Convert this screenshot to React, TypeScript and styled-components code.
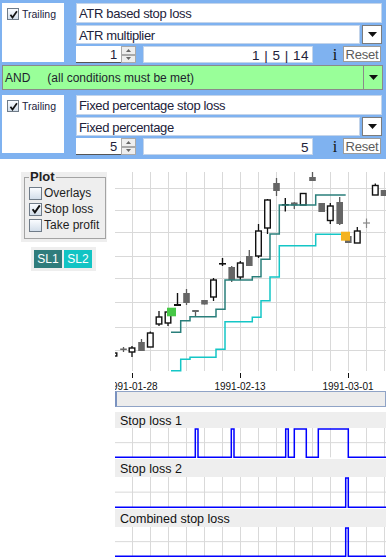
import React from 'react'
import styled, { createGlobalStyle, css } from 'styled-components'

const GlobalStyle = createGlobalStyle`
  html, body {
    margin: 0;
    padding: 0;
    background: #fff;
  }
  body {
    font-family: "Liberation Sans", Arial, sans-serif;
  }
  #root {
    width: 386px;
    height: 560px;
    overflow: hidden;
  }
`

const Page = styled.div`
  width: 386px;
  height: 560px;
  overflow: hidden;
  background: #fff;
`

// ---- condition editor (blue panel) ----

const ConfigPanel = styled.div`
  background: #7fb2f0;
  padding: 3px 0 4px;
`

const ConditionBlock = styled.div<{ $top?: number }>`
  display: flex;
  gap: 12px;
  padding: 0 4px 0 2px;
  margin-top: ${({ $top }) => $top ?? 0}px;
`

const TrailingCell = styled.div<{ $h: number }>`
  width: 62px;
  height: ${({ $h }) => $h}px;
  box-sizing: border-box;
  background: #fff;
  display: flex;
  align-items: flex-start;
  gap: 3px;
  padding: 5px 0 0 5px;
`

const TrailingLabel = styled.span`
  font-size: 10.5px;
  line-height: 12px;
  color: #22223c;
`

const Box = styled.span<{ $size: number }>`
  width: ${({ $size }) => $size}px;
  height: ${({ $size }) => $size}px;
  box-sizing: border-box;
  border: 1px solid #6f7b88;
  background: linear-gradient(#fafcff, #d3deea);
  display: flex;
  align-items: center;
  justify-content: center;
  flex-shrink: 0;
`

const CheckBox = ({ checked, size }: { checked?: boolean; size: number }) => (
  <Box $size={size}>
    {checked && (
      <svg width={size - 3} height={size - 3} viewBox="0 0 10 10">
        <path d="M1.6 5.2 L3.9 8.4 L8.8 1.4" stroke="#111" strokeWidth="1.9" fill="none" />
      </svg>
    )}
  </Box>
)

const Fields = styled.div`
  flex: 1;
  display: flex;
  flex-direction: column;
  gap: 2px;
`

const fieldText = css`
  font-size: 13px;
  letter-spacing: -0.35px;
  color: #22223a;
  white-space: nowrap;
  overflow: hidden;
`

const TextField = styled.div`
  ${fieldText}
  height: 20px;
  box-sizing: border-box;
  background: #fff;
  border: 1px solid #c3d4ea;
  display: flex;
  align-items: center;
  padding: 1px 0 0 2px;
`

const SelectRow = styled.div`
  display: flex;
  gap: 2px;
  height: 19px;
`

const SelectText = styled(TextField)`
  flex: 1;
  height: auto;
`

const ArrowButton = styled.div`
  width: 20px;
  box-sizing: border-box;
  border: 1px solid #7c7c7c;
  background: #fff;
  display: flex;
  align-items: center;
  justify-content: center;
`

const DownArrow = () => (
  <svg width="9" height="5" viewBox="0 0 9 5">
    <polygon points="0,0 9,0 4.5,5" fill="#111" />
  </svg>
)

const ParamRow = styled.div`
  display: flex;
  align-items: stretch;
  height: 17px;
`

const NumberBox = styled.div`
  ${fieldText}
  width: 45px;
  box-sizing: border-box;
  background: #fff;
  border-bottom: 1px solid #555;
  display: flex;
  align-items: center;
  justify-content: flex-end;
  padding: 1px 4px 0 0;
`

const Spinner = styled.div`
  width: 15px;
  display: flex;
  flex-direction: column;
`

const SpinButton = styled.div`
  flex: 1;
  box-sizing: border-box;
  border: 1px solid #a9a9a9;
  background: #eeeeee;
  display: flex;
  align-items: center;
  justify-content: center;
`

const SpinArrow = ({ up }: { up?: boolean }) => (
  <svg width="5" height="3" viewBox="0 0 5 3">
    <polygon points={up ? '0,3 5,3 2.5,0' : '0,0 5,0 2.5,3'} fill="#666" />
  </svg>
)

const RangeField = styled.div`
  width: 170px;
  margin-left: 7px;
  box-sizing: border-box;
  background: #fff;
  border: 1px solid #c3d4ea;
  display: flex;
  align-items: center;
  justify-content: flex-end;
  padding: 1px 3px 0 0;
  font-size: 13.5px;
  letter-spacing: 0.5px;
  color: #22223a;
  white-space: pre;
`

const Info = styled.div`
  width: 30px;
  box-sizing: border-box;
  padding-left: 14px;
  text-align: center;
  font-family: "Liberation Serif", "Times New Roman", serif;
  font-size: 16px;
  line-height: 17px;
  color: #111;
`

const ResetButton = styled.div`
  width: 38px;
  height: 16px;
  box-sizing: border-box;
  border: 1px solid #9c9c9c;
  background: #fff;
  color: #5c5c5c;
  font-size: 13px;
  letter-spacing: -0.2px;
  display: flex;
  align-items: center;
  justify-content: center;
`

const LogicSelect = styled.div`
  margin: 2px 3px 0 2px;
  height: 25px;
  box-sizing: border-box;
  border: 1px solid #8a8a8a;
  background: #99ff99;
  display: flex;
`

const LogicText = styled.div`
  flex: 1;
  display: flex;
  align-items: center;
  padding: 1px 0 0 2px;
  font-size: 12px;
  color: #1e1e2e;
  white-space: pre;
`

const LogicHint = styled.span`
  margin-left: 17px;
`

const LogicArrow = styled.div`
  width: 18px;
  border-left: 1px solid #8a8a8a;
  display: flex;
  align-items: center;
  justify-content: center;
`

type Condition = {
  title: string
  method: string
  value: string
  range: string
}

const conditions: Condition[] = [
  { title: 'ATR based stop loss', method: 'ATR multiplier', value: '1', range: '1 | 5 | 14' },
  { title: 'Fixed percentage stop loss', method: 'Fixed percentage', value: '5', range: '5' },
]

const ConditionEditor = ({ c, top, cellHeight }: { c: Condition; top?: number; cellHeight: number }) => (
  <ConditionBlock $top={top}>
    <TrailingCell $h={cellHeight}>
      <CheckBox checked size={12} />
      <TrailingLabel>Trailing</TrailingLabel>
    </TrailingCell>
    <Fields>
      <TextField>{c.title}</TextField>
      <SelectRow>
        <SelectText>{c.method}</SelectText>
        <ArrowButton>
          <DownArrow />
        </ArrowButton>
      </SelectRow>
      <ParamRow>
        <NumberBox>{c.value}</NumberBox>
        <Spinner>
          <SpinButton>
            <SpinArrow up />
          </SpinButton>
          <SpinButton>
            <SpinArrow />
          </SpinButton>
        </Spinner>
        <RangeField>{c.range}</RangeField>
        <Info>i</Info>
        <ResetButton>Reset</ResetButton>
      </ParamRow>
    </Fields>
  </ConditionBlock>
)

// ---- lower workspace ----

const Workspace = styled.div`
  display: flex;
`

const Sidebar = styled.div`
  width: 115px;
  box-sizing: border-box;
  padding: 13px 0 0 21px;
  display: flex;
  flex-direction: column;
  align-items: flex-start;
`

const PlotBox = styled.div`
  width: 86px;
  box-sizing: border-box;
  background: #eeeeee;
  padding: 0 1px 3px 3px;
`

const PlotFieldset = styled.fieldset`
  margin: 0;
  padding: 3px 0 5px 4px;
  border: 1px solid #a3a3a3;
  min-width: 0;
`

const PlotLegend = styled.legend`
  font-weight: bold;
  font-size: 13px;
  line-height: 10px;
  padding: 0 1px;
  color: #222;
`

const PlotRow = styled.div`
  display: flex;
  align-items: center;
  gap: 2px;
  height: 16px;
  font-size: 12px;
  color: #1e1e1e;
`

const SeriesBar = styled.div`
  margin: 5px 0 0 10px;
  background: #eeeeee;
  padding: 3px 4px 3px 3px;
  display: flex;
  gap: 2px;
`

const SeriesButton = styled.div<{ $bg: string }>`
  width: 28px;
  height: 18px;
  background: ${({ $bg }) => $bg};
  color: #fff;
  font-size: 12px;
  display: flex;
  align-items: center;
  justify-content: center;
`

const ChartColumn = styled.div`
  width: 271px;
  display: flex;
  flex-direction: column;
`

const ChartSvg = styled.svg`
  display: block;
`

const ScrollTrack = styled.div`
  height: 16px;
  box-sizing: border-box;
  border: 1px solid #8fa3c6;
  border-left: 2px solid #7a92c0;
  background: #ececec;
`

const SubPanels = styled.div`
  margin-top: 5px;
`

const Band = styled.div<{ $h: number }>`
  height: ${({ $h }) => $h}px;
  background: #eeeeee;
  display: flex;
  align-items: center;
  padding: 1px 0 0 5px;
  box-sizing: border-box;
  font-size: 12.5px;
  color: #111;
`

type Candle = {
  x: number
  top: number
  bot: number
  hi?: number
  lo?: number
  kind: 'up' | 'down' | 'doji' | 'cross'
}

const candles: Candle[] = [
  { x: 114, top: 353, bot: 356, kind: 'up' },
  { x: 123.5, top: 348.5, bot: 350, hi: 347, lo: 352, kind: 'down' },
  { x: 132, top: 348, bot: 352, hi: 346, lo: 357, kind: 'up' },
  { x: 141.5, top: 342, bot: 351, hi: 339, lo: 351, kind: 'down' },
  { x: 150.3, top: 333, bot: 347, hi: 331.5, lo: 347, kind: 'up' },
  { x: 159, top: 317, bot: 324, hi: 311, lo: 326, kind: 'up' },
  { x: 168, top: 312, bot: 323, hi: 310, lo: 326, kind: 'up' },
  { x: 177.5, top: 304, bot: 306, hi: 293, lo: 306, kind: 'doji' },
  { x: 186.5, top: 293, bot: 303, hi: 289, lo: 305, kind: 'down' },
  { x: 195.5, top: 310, bot: 312, hi: 310, lo: 317, kind: 'down' },
  { x: 204.5, top: 300, bot: 304.5, kind: 'down' },
  { x: 213.5, top: 280, bot: 297, hi: 278, lo: 301, kind: 'up' },
  { x: 222.5, top: 263, bot: 264.5, hi: 258, lo: 266, kind: 'doji' },
  { x: 231.7, top: 267, bot: 280, hi: 266, lo: 282, kind: 'down' },
  { x: 240.3, top: 263, bot: 277, hi: 261, lo: 280, kind: 'up' },
  { x: 249.3, top: 256, bot: 266, hi: 250, lo: 266, kind: 'down' },
  { x: 258.5, top: 231, bot: 256, hi: 224, lo: 258, kind: 'up' },
  { x: 267.5, top: 200, bot: 228, hi: 199, lo: 234, kind: 'up' },
  { x: 276.5, top: 183, bot: 191, hi: 178, lo: 196, kind: 'down' },
  { x: 285.3, top: 204, bot: 205.5, hi: 198, lo: 211.5, kind: 'doji' },
  { x: 294.3, top: 202.5, bot: 205.5, hi: 202, lo: 209, kind: 'down' },
  { x: 303.2, top: 193.5, bot: 205, kind: 'up' },
  { x: 312.5, top: 177, bot: 181, hi: 172, lo: 181, kind: 'down' },
  { x: 321.7, top: 203, bot: 212, kind: 'down' },
  { x: 330.3, top: 206, bot: 220.5, hi: 203, lo: 224, kind: 'up' },
  { x: 339.7, top: 202, bot: 224, hi: 197, lo: 225, kind: 'down' },
  { x: 348.3, top: 236, bot: 243, kind: 'down' },
  { x: 357.3, top: 231, bot: 243, hi: 227, lo: 243, kind: 'up' },
  { x: 366.5, top: 223, bot: 223, hi: 218.5, lo: 228, kind: 'cross' },
  { x: 375.3, top: 185.5, bot: 195, hi: 183.5, lo: 195, kind: 'up' },
  { x: 384, top: 190, bot: 196, kind: 'down' },
]

const SL1_PATH =
  'M171,332.3 H180.7 V320.7 H190 V316.7 H216 V309.3 H225 V280 H252.3 V276.7 H261 V259.3 H270 V234 H279.3 V205 H315.7 V195 H345.7'
const SL2_PATH =
  'M171,370.7 H180.7 V359.3 H190 V357.3 H216 V349.3 H225 V321.7 H252.3 V317.3 H261 V300.7 H270 V277 H279.3 V245.7 H315.7 V234.3 H345.7'

const gridX = Array.from({ length: 15 }, (_, i) => 132 + 18 * i)
const gridY = [188, 210, 232, 256, 278, 302, 327, 350]
const dateTicks = [
  { x: 132, label: '1991-01-28' },
  { x: 240, label: '1991-02-13' },
  { x: 348, label: '1991-03-01' },
]

const CandleMark = ({ c }: { c: Candle }) => {
  const hi = c.hi ?? c.top
  const lo = c.lo ?? c.bot
  if (c.kind === 'cross') {
    return (
      <g stroke="#888" strokeWidth={1.2}>
        <line x1={c.x - 3.5} x2={c.x + 3.5} y1={c.top} y2={c.top} />
        <line x1={c.x} x2={c.x} y1={hi} y2={lo} />
      </g>
    )
  }
  if (c.kind === 'doji') {
    return (
      <g>
        <line x1={c.x} x2={c.x} y1={hi} y2={lo} stroke="#111" strokeWidth={1.4} />
        <rect x={c.x - 3.5} y={c.top} width={7} height={Math.max(c.bot - c.top, 1.6)} fill="#111" />
      </g>
    )
  }
  if (c.kind === 'down') {
    return (
      <g>
        <line x1={c.x} x2={c.x} y1={hi} y2={lo} stroke="#5a5a5a" strokeWidth={1.3} />
        <rect x={c.x - 3.3} y={c.top} width={6.6} height={c.bot - c.top} fill="#666" />
      </g>
    )
  }
  return (
    <g>
      <line x1={c.x} x2={c.x} y1={hi} y2={lo} stroke="#111" strokeWidth={1.3} />
      <rect x={c.x - 2.8} y={c.top} width={5.6} height={c.bot - c.top} fill="#fff" stroke="#111" strokeWidth={1.4} />
    </g>
  )
}

const MainChart = () => (
  <ChartSvg width={271} height={232} viewBox="115 159 271 232">
    {gridX.map((x) => (
      <line key={`v${x}`} x1={x + 0.5} x2={x + 0.5} y1={172} y2={371} stroke="#d9d9d9" />
    ))}
    {gridY.map((y) => (
      <line key={`h${y}`} x1={115} x2={386} y1={y + 0.5} y2={y + 0.5} stroke="#d9d9d9" />
    ))}
    {candles.map((c) => (
      <CandleMark key={c.x} c={c} />
    ))}
    <path d={SL1_PATH} stroke="#2a7f7b" strokeWidth={1.5} fill="none" />
    <path d={SL2_PATH} stroke="#14c6c6" strokeWidth={1.5} fill="none" />
    <rect x={167} y={307.7} width={9} height={8.6} fill="#47c847" />
    <rect x={341} y={231.7} width={9} height={9} fill="#f4b320" />
    {dateTicks.map((t) => (
      <g key={t.label}>
        <line x1={t.x + 0.5} x2={t.x + 0.5} y1={373} y2={378} stroke="#111" />
        <text x={t.x} y={389.5} textAnchor="middle" fontSize={10} fontFamily='"Liberation Sans", Arial, sans-serif' fill="#111">
          {t.label}
        </text>
      </g>
    ))}
  </ChartSvg>
)

const SubPlot = ({ h, pulses }: { h: number; pulses: [number, number][] }) => {
  const base = h - 1.7
  const mid = base / 2
  const d =
    `M115,${base} ` +
    pulses.map(([a, b]) => `H${a} V1 H${b} V${base}`).join(' ') +
    ' H386'
  return (
    <ChartSvg width={271} height={h} viewBox={`115 0 271 ${h}`}>
      {gridX.map((x) => (
        <line key={x} x1={x + 0.5} x2={x + 0.5} y1={0} y2={base} stroke="#d9d9d9" />
      ))}
      <line x1={115} x2={386} y1={mid} y2={mid} stroke="#d9d9d9" />
      <path d={d} stroke="#0000ff" strokeWidth={1.5} fill="none" />
    </ChartSvg>
  )
}

const panels: { label: string; band: number; plot: number; pulses: [number, number][] }[] = [
  {
    label: 'Stop loss 1',
    band: 16,
    plot: 31,
    pulses: [
      [195.3, 198],
      [231.3, 234],
      [285.7, 288.3],
      [294.3, 306.3],
      [318.3, 348.3],
    ],
  },
  { label: 'Stop loss 2', band: 18, plot: 32, pulses: [[345.7, 348.3]] },
  { label: 'Combined stop loss', band: 18, plot: 31, pulses: [[345.7, 348.3]] },
]

const App: React.FC = () => (
  <Page>
    <GlobalStyle />
    <ConfigPanel>
      <ConditionEditor c={conditions[0]} cellHeight={59} />
      <LogicSelect>
        <LogicText>
          AND<LogicHint>(all conditions must be met)</LogicHint>
        </LogicText>
        <LogicArrow>
          <DownArrow />
        </LogicArrow>
      </LogicSelect>
      <ConditionEditor c={conditions[1]} top={5} cellHeight={58} />
    </ConfigPanel>
    <Workspace>
      <Sidebar>
        <PlotBox>
          <PlotFieldset>
            <PlotLegend>Plot</PlotLegend>
            <PlotRow>
              <CheckBox size={13} />
              Overlays
            </PlotRow>
            <PlotRow>
              <CheckBox checked size={13} />
              Stop loss
            </PlotRow>
            <PlotRow>
              <CheckBox size={13} />
              Take profit
            </PlotRow>
          </PlotFieldset>
        </PlotBox>
        <SeriesBar>
          <SeriesButton $bg="#2f7c7c">SL1</SeriesButton>
          <SeriesButton $bg="#12c4c4">SL2</SeriesButton>
        </SeriesBar>
      </Sidebar>
      <ChartColumn>
        <MainChart />
        <ScrollTrack />
        <SubPanels>
          {panels.map((p) => (
            <div key={p.label}>
              <Band $h={p.band}>{p.label}</Band>
              <SubPlot h={p.plot} pulses={p.pulses} />
            </div>
          ))}
        </SubPanels>
      </ChartColumn>
    </Workspace>
  </Page>
)

export default App
